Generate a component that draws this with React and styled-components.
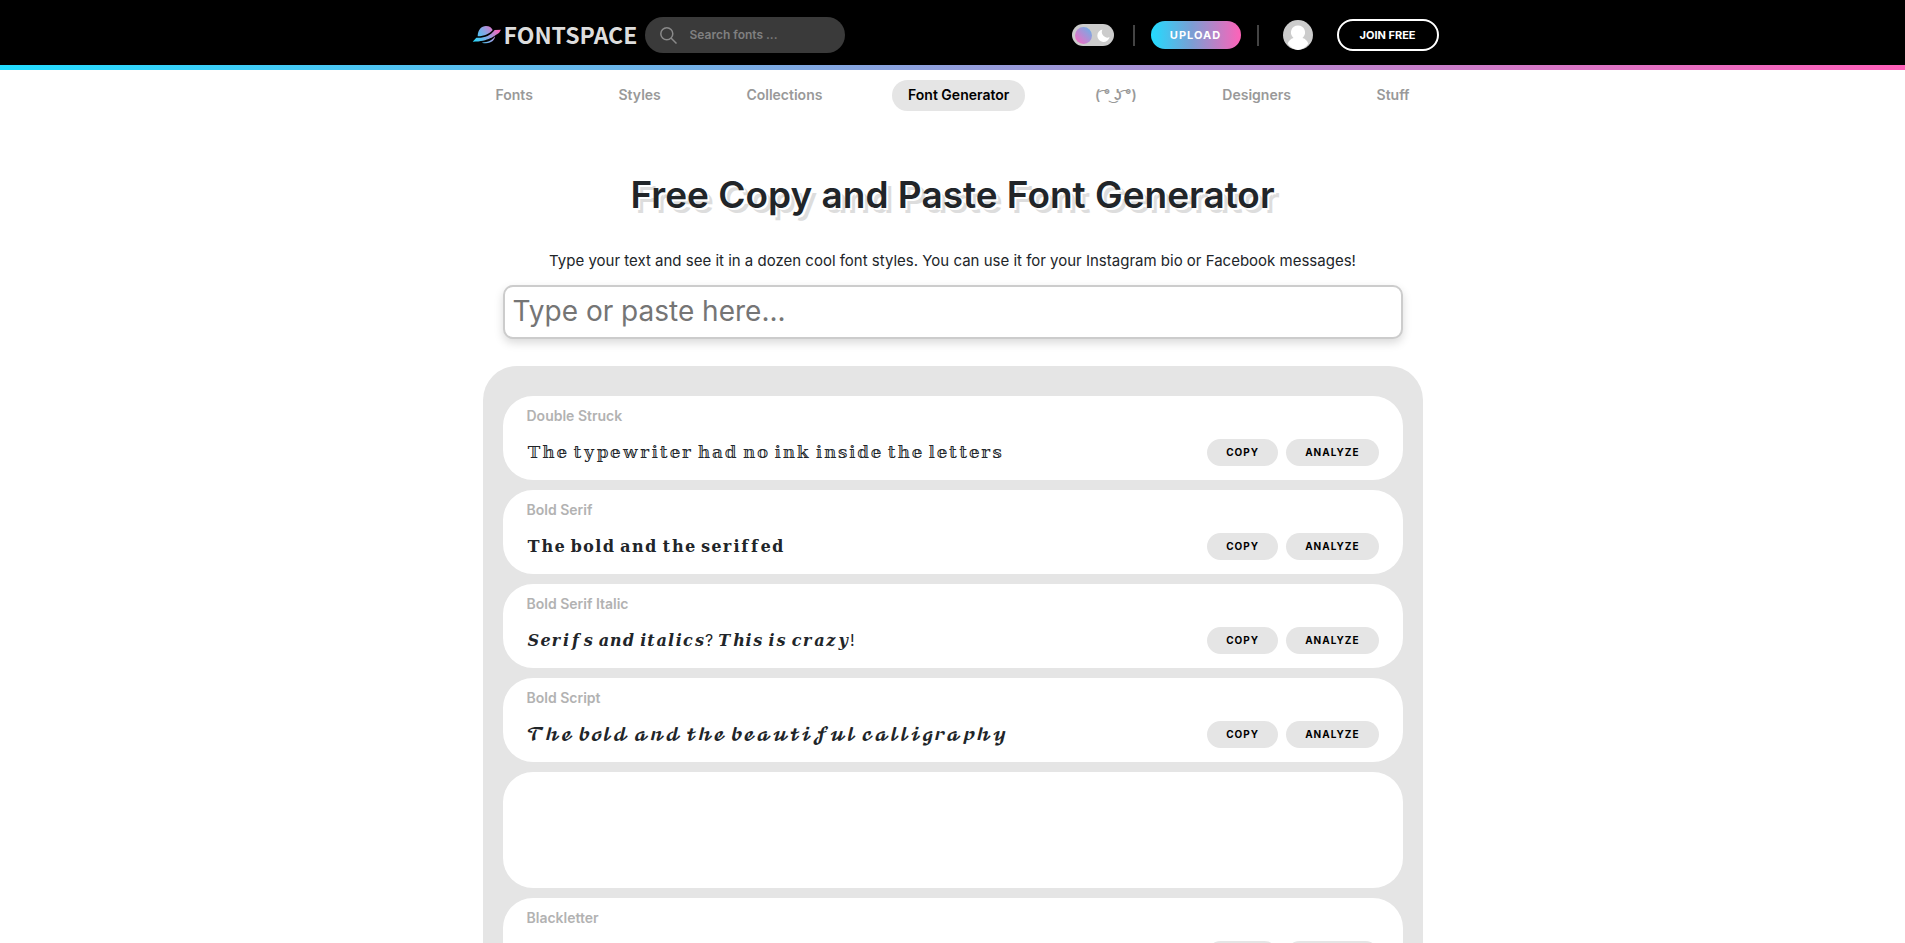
// Imports
import React, { useState } from "react";
import styled, { createGlobalStyle } from "styled-components";

// Data
const navItems = ["Fonts", "Styles", "Collections", "Font Generator", "( ͡° ͜ʖ ͡°)", "Designers", "Stuff"];

const fontStyles = [
	{ name: "Double Struck", size: 17, text: "𝕋𝕙𝕖 𝕥𝕪𝕡𝕖𝕨𝕣𝕚𝕥𝕖𝕣 𝕙𝕒𝕕 𝕟𝕠 𝕚𝕟𝕜 𝕚𝕟𝕤𝕚𝕕𝕖 𝕥𝕙𝕖 𝕝𝕖𝕥𝕥𝕖𝕣𝕤" },
	{ name: "Bold Serif", size: 16, text: "𝐓𝐡𝐞 𝐛𝐨𝐥𝐝 𝐚𝐧𝐝 𝐭𝐡𝐞 𝐬𝐞𝐫𝐢𝐟𝐟𝐞𝐝" },
	{ name: "Bold Serif Italic", size: 16, text: "𝑺𝒆𝒓𝒊𝒇𝒔 𝒂𝒏𝒅 𝒊𝒕𝒂𝒍𝒊𝒄𝒔? 𝑻𝒉𝒊𝒔 𝒊𝒔 𝒄𝒓𝒂𝒛𝒚!" },
	{ name: "Bold Script", size: 16, text: "𝓣𝓱𝓮 𝓫𝓸𝓵𝓭 𝓪𝓷𝓭 𝓽𝓱𝓮 𝓫𝓮𝓪𝓾𝓽𝓲𝓯𝓾𝓵 𝓬𝓪𝓵𝓵𝓲𝓰𝓻𝓪𝓹𝓱𝔂" },
	{ ad: true },
	{ name: "Blackletter", size: 17, text: "" },
];

// Logo
const Planet = () => {
	return(
		<PlanetIcon width="30" height="20" viewBox="0 0 90 60" aria-hidden="true">
			<defs>
				<linearGradient id="planet" x1="0" y1="60" x2="90" y2="0" gradientUnits="userSpaceOnUse">
					<stop offset="0.1" stopColor="#27d8fb"/>
					<stop offset="0.5" stopColor="#8aa4e4"/>
					<stop offset="0.85" stopColor="#ff62ba"/>
				</linearGradient>
			</defs>
			<g fill="url(#planet)">
				<path d="M17 34C17 14 28 3 42 3c10 0 17 5 20 12C54 25 36 34 17 34Z"/>
				<path d="M2 50 13 38c21 2 42-5 55-23l19-1-6 10C66 32 52 50 2 50Z"/>
				<path d="M29 53c20-1 33-8 40-19 0 12-13 25-40 19Z"/>
			</g>
		</PlanetIcon>
	);
};

// Font row
const FontRow = ({ item }) => {
	if(item.ad){ return <Card $ad/>; }
	return(
		<Card>
			<CardName>{ item.name }</CardName>
			<CardBody>
				<Sample $size={ item.size }>{ item.text }</Sample>
				<Actions>
					<Action type="button">COPY</Action>
					<Action type="button">ANALYZE</Action>
				</Actions>
			</CardBody>
		</Card>
	);
};

// Component
const App = () => {

	// State
	const [dark, setDark] = useState(false);
	const [text, setText] = useState("");

	// Return
	return(
		<>
			<GlobalStyle/>
			<Header>
				<HeaderInner>
					<Logo href="#" aria-label="Fontspace">
						<Planet/>
						<LogoText>FONTSPACE</LogoText>
					</Logo>
					<Search>
						<svg width="17" height="17" viewBox="0 0 17 17" fill="none" stroke="#8a8a8a" strokeWidth="1.5" aria-hidden="true">
							<circle cx="6.8" cy="6.8" r="6"/>
							<path d="m11 11 5.5 5.5"/>
						</svg>
						<input type="search" placeholder="Search fonts ..." aria-label="Search fonts"/>
					</Search>
					<Tools>
						<Toggle>
							<input type="checkbox" aria-label="Dark mode" checked={ dark } onChange={ (e) => { setDark(e.target.checked); } }/>
							<Knob/>
							<svg width="13" height="13" viewBox="0 0 13 13" aria-hidden="true">
								<path d="M5.5.6A6.2 6.2 0 1 0 12.6 8 5.4 5.4 0 0 1 5.5.6Z" fill="#fff"/>
							</svg>
						</Toggle>
						<Divider/>
						<Upload type="button">UPLOAD</Upload>
						<Divider/>
						<Avatar width="30" height="30" viewBox="0 0 30 30" role="img" aria-label="Account">
							<circle cx="15" cy="15" r="15" fill="#ccc"/>
							<path d="M15 5.5a7 7 0 0 1 4.5 12.4c3 .8 5 3 5.8 5.9A15 15 0 0 1 15 30 15 15 0 0 1 4.7 23.8c.8-2.9 2.8-5.1 5.8-5.9A7 7 0 0 1 15 5.5Z" fill="#fff"/>
						</Avatar>
						<Join type="button">JOIN FREE</Join>
					</Tools>
				</HeaderInner>
			</Header>
			<Nav>
				{ navItems.map((item) => {
					return <NavLink key={ item } href="#" $active={ item === "Font Generator" }>{ item }</NavLink>;
				}) }
			</Nav>
			<Main>
				<Title>Free Copy and Paste Font Generator</Title>
				<Intro htmlFor="generator">Type your text and see it in a dozen cool font styles. You can use it for your Instagram bio or Facebook messages!</Intro>
				<TextBox id="generator" type="text" placeholder="Type or paste here..." value={ text } onChange={ (e) => { setText(e.target.value); } }/>
				<Panel>
					{ fontStyles.map((item, i) => { return <FontRow key={ i } item={ item }/>; }) }
				</Panel>
			</Main>
		</>
	);

};

// Styled
const GlobalStyle = createGlobalStyle`
	*{
		box-sizing: border-box;
	}
	html{
		scrollbar-width: none;
	}
	body{
		margin: 0;
		background-color: white;
		color: #212529;
		font-family: Inter, "Open Sans", sans-serif;
		font-size: 14px;
	}
	button, input{
		font-family: inherit;
	}
	a{
		text-decoration: none;
	}
`;

const Header = styled.header`
	background-color: black;
	&::after{
		content: "";
		display: block;
		height: 5px;
		background: linear-gradient(90deg, #22dcff, #ff5fb8);
	}
`;

const HeaderInner = styled.div`
	display: flex;
	align-items: center;
	max-width: 974px;
	height: 65px;
	margin: 0 auto;
	padding: 5px 1px 0 6px;
`;

const Logo = styled.a`
	display: flex;
	align-items: center;
	gap: 2px;
	width: 173px;
`;

const PlanetIcon = styled.svg`
	flex: none;
`;

const LogoText = styled.span`
	padding-bottom: 2px;
	color: #ddd;
	font-family: "Noto Sans CJK JP", sans-serif;
	font-size: 23px;
	line-height: 28px;
	font-weight: 700;
`;

const Search = styled.div`
	display: flex;
	align-items: center;
	gap: 13px;
	width: 200px;
	height: 36px;
	padding: 0 15px;
	background-color: #3a3a3a;
	border-radius: 18px;
	input{
		flex: 1;
		min-width: 0;
		padding: 0 0 1px;
		border: 0;
		outline: 0;
		background: none;
		color: white;
		font-size: 12px;
		font-weight: 600;
	}
	input::placeholder{
		color: #808080;
	}
`;

const Tools = styled.div`
	display: flex;
	align-items: center;
	margin-left: auto;
`;

const Toggle = styled.label`
	display: flex;
	align-items: center;
	justify-content: space-between;
	width: 42px;
	height: 22px;
	margin-right: 3px;
	padding: 0 4px 0 3px;
	background-color: #ccc;
	border-radius: 11px;
	cursor: pointer;
	input{
		position: absolute;
		opacity: 0;
	}
`;

const Knob = styled.span`
	width: 17px;
	height: 17px;
	border-radius: 50%;
	background: linear-gradient(45deg, #ff66c0, #62b5ea);
`;

const Divider = styled.span`
	width: 2px;
	height: 21px;
	margin: 0 16px;
	background-color: #444;
`;

const Upload = styled.button`
	width: 90px;
	height: 28px;
	padding: 0 0 1px;
	border: 0;
	border-radius: 14px;
	background: linear-gradient(90deg, #22dcff, #7a9ed4 45%, #ff62b8);
	color: white;
	font-size: 11px;
	font-weight: 700;
	letter-spacing: 1px;
`;

const Avatar = styled.svg`
	margin: 0 24px 0 8px;
`;

const Join = styled.button`
	width: 102px;
	height: 32px;
	padding: 0 0 1px;
	border: 2px solid white;
	border-radius: 16px;
	background-color: black;
	color: white;
	font-size: 11px;
	font-weight: 700;
`;

const Nav = styled.nav`
	display: flex;
	justify-content: space-between;
	max-width: 946px;
	margin: 10px auto 0;
`;

const NavLink = styled.a`
	padding: 0 16px 2px;
	border-radius: 16px;
	background-color: ${ ({ $active }) => { return $active ? "#e5e5e5" : "transparent"; } };
	color: ${ ({ $active }) => { return $active ? "black" : "#999"; } };
	font-size: 14px;
	line-height: 29px;
	font-weight: 600;
	white-space: pre;
`;

const Main = styled.main`
	display: flex;
	flex-direction: column;
	align-items: center;
	max-width: 940px;
	margin: 0 auto;
`;

const Title = styled.h1`
	margin: 60px 0 32px;
	font-size: 37px;
	line-height: 48px;
	font-weight: 600;
	text-shadow: 2px 2px white, 5px 5px #ddd;
`;

const Intro = styled.label`
	font-size: 15px;
	line-height: 20px;
`;

const TextBox = styled.input`
	width: calc(100% - 40px);
	height: 54px;
	margin: 14px 0 27px;
	padding: 0 8px 2px;
	border: 2px solid #ccc;
	border-radius: 10px;
	box-shadow: 0 4px 10px rgba(0,0,0,0.15);
	font-size: 28px;
	color: #212529;
	&::placeholder{
		color: #757575;
	}
`;

const Panel = styled.section`
	display: flex;
	flex-direction: column;
	gap: 10px;
	width: 100%;
	padding: 30px 20px;
	background-color: #e5e5e5;
	border-radius: 34px;
`;

const Card = styled.article`
	min-height: ${ ({ $ad }) => { return $ad ? "116px" : "84px"; } };
	padding: 10px 24px 14px;
	background-color: white;
	border-radius: 30px;
`;

const CardName = styled.h2`
	margin: 0 0 12px;
	color: #b2b2b2;
	font-size: 14px;
	line-height: 20px;
	font-weight: 600;
`;

const CardBody = styled.div`
	display: flex;
	align-items: center;
	justify-content: space-between;
	height: 28px;
`;

const Sample = styled.p`
	margin: 0;
	font-family: Inter, "DejaVu Math TeX Gyre", "DejaVu Serif", "DejaVu Sans", serif;
	font-size: ${ ({ $size }) => { return $size; } }px;
	line-height: 28px;
	white-space: nowrap;
`;

const Actions = styled.div`
	display: flex;
	gap: 8px;
`;

const Action = styled.button`
	height: 27px;
	padding: 0 19px;
	border: 0;
	border-radius: 14px;
	background-color: #e5e5e5;
	color: black;
	font-size: 10px;
	font-weight: 700;
	letter-spacing: 1px;
`;

// Export
export default App;
